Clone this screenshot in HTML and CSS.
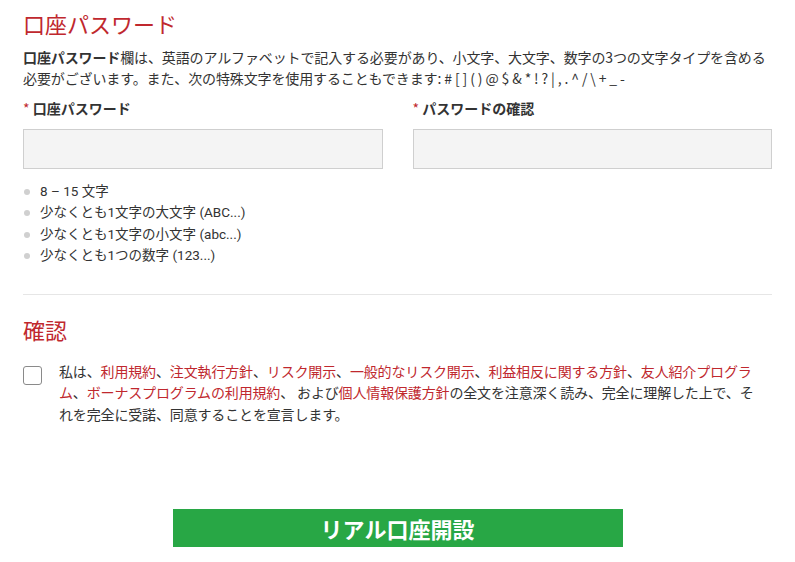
FILE: index.html
```html
<!DOCTYPE html>
<html lang="ja">
<head>
<meta charset="utf-8">
<link rel="stylesheet" href="styles.css">
</head>
<body>
<div class="page">
  <h2 class="title">口座パスワード</h2>
  <p class="intro"><strong>口座パスワード</strong>欄は、英語のアルファベットで記入する必要があり、小文字、大文字、数字の3つの文字タイプを含める必要がございます。また、次の特殊文字を使用することもできます: # [ ] ( ) @ $ &amp; * ! ? | , . ^ / \ + _ -</p>
  <div class="fields">
    <div class="field">
      <label class="label"><span class="req">*</span> 口座パスワード</label>
      <input class="input" type="password">
      <ul class="rules">
        <li>8 – 15 文字</li>
        <li>少なくとも1文字の大文字 (ABC...)</li>
        <li>少なくとも1文字の小文字 (abc...)</li>
        <li>少なくとも1つの数字 (123...)</li>
      </ul>
    </div>
    <div class="field">
      <label class="label"><span class="req">*</span> パスワードの確認</label>
      <input class="input" type="password">
    </div>
  </div>
  <hr class="divider">
  <h2 class="title title-confirm">確認</h2>
  <div class="agree">
    <span class="checkbox"></span>
    <p class="agree-text">私は、<a>利用規約</a>、<a>注文執行方針</a>、<a>リスク開示</a>、<a>一般的なリスク開示</a>、<a>利益相反に関する方針</a>、<a>友人紹介プログラ<br>ム</a>、<a>ボーナスプログラムの利用規約</a>、 および<a>個人情報保護方針</a>の全文を注意深く読み、完全に理解した上で、それを完全に受諾、同意することを宣言します。</p>
  </div>
  <div class="actions">
    <button class="submit">リアル口座開設</button>
  </div>
</div>
</body>
</html>
```
FILE: styles.css
```css
* { box-sizing: border-box; }
body {
  margin: 0;
  background: #fff;
  font-family: Roboto, "Noto Sans CJK JP", sans-serif;
  color: #333;
}
.page {
  padding: 10px 23px 0 23px;
}
.title {
  margin: 0;
  font-family: "Noto Sans CJK JP", sans-serif;
  font-weight: 400;
  font-size: 22px;
  line-height: 26px;
  color: #c0282e;
}
.intro {
  margin: 11px 0 0;
  font-family: "Noto Sans CJK JP", sans-serif;
  font-size: 14px;
  line-height: 21px;
  letter-spacing: -0.12px;
  color: #333;
}
.intro strong { font-weight: 700; }
.fields {
  display: grid;
  grid-template-columns: 1fr 1fr;
  column-gap: 30px;
  margin-top: 9px;
}
.field { display: flex; flex-direction: column; }
.label {
  font-family: "Noto Sans CJK JP", sans-serif;
  font-size: 14px;
  font-weight: 700;
  line-height: 21px;
  color: #333;
}
.req { color: #c0282e; font-weight: 400; }
.input {
  margin-top: 10px;
  height: 40px;
  width: 100%;
  background: #f4f4f4;
  border: 1px solid #cfcfcf;
  border-radius: 0;
  outline: none;
}
.rules {
  list-style: none;
  margin: 12px 0 0;
  padding: 0;
  font-size: 13.5px;
  line-height: 21.4px;
  color: #333;
}
.rules li {
  display: flex;
  align-items: center;
  gap: 10px;
}
.rules li::before {
  content: "";
  width: 6px;
  height: 6px;
  border-radius: 50%;
  background: #d0d0d0;
  margin-left: 1px;
}
.divider {
  margin: 27px 0 0;
  border: 0;
  border-top: 1px solid #e6e6e6;
}
.title-confirm { margin-top: 21px; }
.agree {
  display: flex;
  align-items: flex-start;
  gap: 17px;
  margin-top: 19px;
}
.checkbox {
  flex: none;
  width: 19px;
  height: 19px;
  margin-top: 5px;
  border: 1px solid #8a8a8a;
  border-radius: 3px;
  background: #fff;
}
.agree-text {
  margin: 0;
  padding-right: 8px;
  flex: 1;
  font-family: "Noto Sans CJK JP", sans-serif;
  font-size: 14px;
  line-height: 21.5px;
  letter-spacing: -0.15px;
  color: #333;
}
.agree-text a { color: #c0282e; }
.actions {
  display: flex;
  justify-content: center;
  margin-top: 84px;
}
.submit {
  width: 450px;
  height: 38px;
  border: 0;
  background: #28a745;
  color: #fff;
  font-family: "Noto Sans CJK JP", sans-serif;
  font-size: 22px;
  font-weight: 700;
  line-height: 38px;
  padding: 0;
}
```
